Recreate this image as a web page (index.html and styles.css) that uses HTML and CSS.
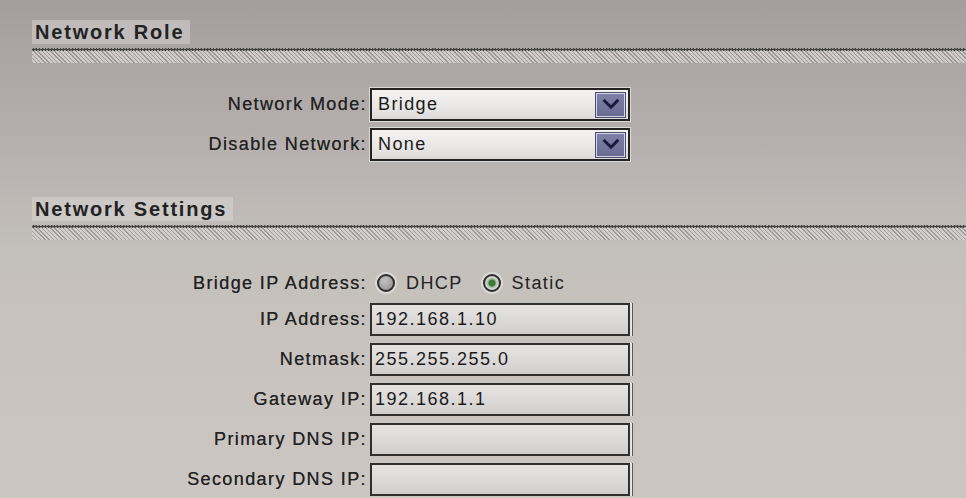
FILE: index.html
```html
<!DOCTYPE html>
<html>
<head>
<meta charset="utf-8">
<link rel="stylesheet" href="styles.css">
</head>
<body>
<div class="page">
  <section class="sec sec-role">
    <h2 class="sec-title"><span>Network Role</span></h2>
    <div class="rule"></div>
    <div class="form form-role">
      <label class="lbl">Network Mode:</label>
      <div class="select"><span class="val">Bridge</span><span class="arrow"><svg viewBox="0 0 20 14" width="18" height="13"><path d="M3 3 L10 10 L17 3" fill="none" stroke="#161a3a" stroke-width="3.2" stroke-linecap="square"/></svg></span></div>
      <label class="lbl">Disable Network:</label>
      <div class="select"><span class="val">None</span><span class="arrow"><svg viewBox="0 0 20 14" width="18" height="13"><path d="M3 3 L10 10 L17 3" fill="none" stroke="#161a3a" stroke-width="3.2" stroke-linecap="square"/></svg></span></div>
    </div>
  </section>
  <section class="sec sec-settings">
    <h2 class="sec-title"><span>Network Settings</span></h2>
    <div class="rule"></div>
    <div class="form form-settings">
      <label class="lbl">Bridge IP Address:</label>
      <div class="radios">
        <span class="radio"><span class="dot"></span>DHCP</span>
        <span class="radio checked"><span class="dot"></span>Static</span>
      </div>
      <label class="lbl">IP Address:</label>
      <div class="input">192.168.1.10</div>
      <label class="lbl">Netmask:</label>
      <div class="input">255.255.255.0</div>
      <label class="lbl">Gateway IP:</label>
      <div class="input">192.168.1.1</div>
      <label class="lbl">Primary DNS IP:</label>
      <div class="input"></div>
      <label class="lbl">Secondary DNS IP:</label>
      <div class="input"></div>
    </div>
  </section>
</div>
</body>
</html>
```
FILE: styles.css
```css
html, body {
  margin: 0;
  padding: 0;
  height: 100%;
  overflow: hidden;
}
body {
  background: linear-gradient(180deg, #a49e9e 0px, #b2adab 120px, #c3bfbb 250px, #c9c4c0 380px, #cbc6c2 498px);
  font-family: "Liberation Sans", Arial, sans-serif;
  color: #1e1e1e;
}
.page {
  padding: 20px 0 0 32px;
  border-left: 4px solid #b9b3b1;
  box-sizing: border-box;
  height: 100%;
  margin-left: -4px;
}
.sec-title {
  margin: 0;
  height: 24px;
  line-height: 24px;
  font-size: 20px;
  font-weight: bold;
  letter-spacing: 1.8px;
  color: #222;
}
.sec-title span {
  display: inline-block;
  padding: 0 6px 0 3px;
  background: rgba(222, 219, 217, 0.45);
}
.rule {
  margin-top: 4px;
  height: 15px;
  background:
    radial-gradient(circle at 1.5px 1.5px, #2e2e2e 1.2px, transparent 1.5px) 0 0 / 3px 3px repeat-x,
    repeating-linear-gradient(45deg, #9a9696 0 1px, #d6d4d2 1px 3px),
    #c8c6c4;
  opacity: 0.85;
}
.form {
  display: grid;
  grid-template-columns: 335px 260px;
  column-gap: 3px;
  align-items: center;
}
.form-role {
  margin-top: 25px;
  row-gap: 7px;
}
.sec-settings {
  margin-top: 36px;
}
.form-settings {
  margin-top: 30px;
  row-gap: 7px;
}
.lbl {
  text-align: right;
  font-size: 18px;
  letter-spacing: 1.4px;
  color: #222;
  white-space: nowrap;
  text-shadow: 0 0 0.4px #444;
}
.select {
  height: 33px;
  box-sizing: border-box;
  border: 2px solid #232323;
  background: linear-gradient(180deg, #f3f2f1 0%, #e9e8e6 55%, #dddbd9 100%);
  display: flex;
  align-items: center;
  justify-content: space-between;
  padding: 0 3px 0 6px;
  box-shadow: 0 0 0 1px #dcdad8;
}
.val {
  font-size: 18px;
  letter-spacing: 1.4px;
  color: #1a1a1a;
}
.arrow {
  width: 29px;
  height: 24px;
  box-sizing: border-box;
  background: linear-gradient(180deg, #7e80a6 0%, #6a6c94 100%);
  border: 1px solid #d4d4e2;
  outline: 1px solid #4a4c70;
  display: flex;
  align-items: center;
  justify-content: center;
}
.radios {
  height: 26px;
  display: flex;
  align-items: center;
  gap: 20px;
  padding-left: 7px;
  font-size: 18px;
  letter-spacing: 1.4px;
  color: #222;
}
.radio {
  display: flex;
  align-items: center;
  gap: 11px;
}
.dot {
  width: 18px;
  height: 18px;
  box-sizing: border-box;
  border-radius: 50%;
  border: 2px solid #2e2e2e;
  background: radial-gradient(circle at 40% 35%, #c4c2c0 0%, #8e8c8a 100%);
  box-shadow: 0 0 0 2px rgba(230, 228, 226, 0.7);
}
.radio.checked .dot {
  background: radial-gradient(circle, #3e7a3a 0 3px, #9cb89a 4px, #d6d8d4 6px, #a8a8a6 100%);
}
.input {
  height: 33px;
  box-sizing: border-box;
  border: 2px solid #2f2f2f;
  background: linear-gradient(180deg, #e6e4e2 0%, #dad8d6 60%, #d2d0ce 100%);
  font-size: 18px;
  letter-spacing: 1.5px;
  line-height: 29px;
  padding-left: 3px;
  color: #1a1a1a;
  box-shadow: 2px 0 0 0 #e8e6e4, 3px 0 0 0 #5a5a5a;
}
```
